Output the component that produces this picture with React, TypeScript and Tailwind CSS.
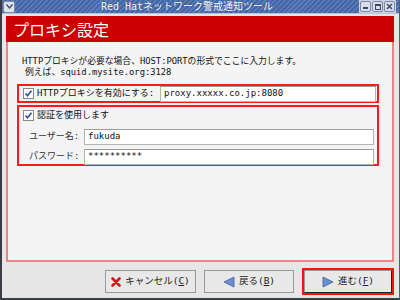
import React from 'react';

const jp = "font-['DejaVu_Sans_Mono','Noto_Sans_CJK_JP',monospace]";

const Check = () => (
    <span className='w-[11px] h-[11px] bg-white border border-[#8a8a8a] flex items-center justify-center shrink-0'>
        <svg width="9" height="9" viewBox="0 0 9 9">
            <path d="M1.5 4.5 L3.5 6.8 L7.5 1.8" stroke="#2a4f9c" strokeWidth="1.6" fill="none" />
        </svg>
    </span>
);

const TitleBtn = ({ kind }: { kind: 'min' | 'max' | 'close' }) => (
    <div className='w-[11px] h-[11px] rounded-[2px] border border-[#7d8aa6] bg-[#d8dde8] flex items-center justify-center'>
        {kind == 'min' && <div className='w-[5px] h-[2px] bg-[#3b4a6b] mt-[3px]' />}
        {kind == 'max' && <div className='w-[6px] h-[6px] border border-[#3b4a6b] border-t-2' />}
        {kind == 'close' && (
            <svg width="7" height="7" viewBox="0 0 7 7">
                <path d="M1 1 L6 6 M6 1 L1 6" stroke="#3b4a6b" strokeWidth="1.5" />
            </svg>
        )}
    </div>
);

const Field = ({ value, className }: { value: string; className?: string }) => (
    <div className={'h-[16px] bg-white border border-[#b4b4b4] border-t-[#9c9c9c] flex items-center px-[3px] text-[9px] text-[#111] whitespace-nowrap ' + (className ?? '')}>
        {value}
    </div>
);

const App = () => {
    return (
        <div className={'w-[400px] h-[300px] bg-[#e6e6e6] border-l-2 border-b-2 border-r border-l-[#3a3d44] border-b-[#3a3d44] border-r-[#5a5d64] flex flex-col overflow-hidden ' + jp}>
            {/* title bar */}
            <div className='h-[14px] flex items-center bg-[repeating-linear-gradient(135deg,#5b7cb8_0px,#5b7cb8_1.5px,#4566a4_1.5px,#4566a4_3.5px)] border-b border-[#b9c3d6]'>
                <div className='w-[12px] h-[12px] ml-px bg-[#dfe3ea] border border-[#7d8aa6] rounded-[2px] flex items-center justify-center'>
                    <svg width="7" height="5" viewBox="0 0 7 5">
                        <path d="M0.5 0.5 L3.5 4 L6.5 0.5" stroke="#3b4a6b" strokeWidth="1.3" fill="none" />
                    </svg>
                </div>
                <div className='flex-1 text-center text-[10px] leading-[12px] text-white whitespace-nowrap [text-shadow:0_0_1px_#1d3566]'>
                    Red Hatネットワーク警戒通知ツール
                </div>
                <div className='flex gap-px mr-[3px] bg-[#c9d1e2] p-px'>
                    <TitleBtn kind='min' />
                    <TitleBtn kind='max' />
                    <TitleBtn kind='close' />
                </div>
            </div>

            {/* panel */}
            <div className='ml-[4px] mr-[5px] mt-[2px] h-[246px] flex flex-col'>
                <div className="h-[26px] bg-[#cc0000] flex items-center pl-[7px] text-white text-[16px] font-['Noto_Sans_CJK_JP',sans-serif]">
                    プロキシ設定
                </div>
                <div className='flex-1 bg-[#f4f4f4] border-x-2 border-b-2 border-[#ea8585] pl-[9px] pr-[13px] pt-[14px]'>
                    <div className='ml-[5px] text-[8.8px] leading-[11px] text-[#111] whitespace-nowrap'>
                        <div>HTTPプロキシが必要な場合、HOST:PORTの形式でここに入力します。</div>
                        <div className='ml-[3px]'>例えば、squid.mysite.org:3128</div>
                    </div>
                    <div className='mt-[6px] h-[19px] border-2 border-[#ff1a1a] flex items-center pl-[4px] pr-px gap-[3px]'>
                        <Check />
                        <span className='text-[9px] text-[#111] w-[120px] shrink-0 whitespace-nowrap'>HTTPプロキシを有効にする:</span>
                        <Field value='proxy.xxxxx.co.jp:8080' className='flex-1 h-[15px]' />
                    </div>
                    <div className='mt-[2px] h-[61px] border-2 border-[#ff1a1a] pl-[4px] pr-[3px] pt-[2px]'>
                        <div className='flex items-center gap-[3px]'>
                            <Check />
                            <span className='text-[9px] text-[#111] whitespace-nowrap'>認証を使用します</span>
                        </div>
                        <div className='mt-[6px] flex items-center'>
                            <span className='w-[61px] pl-[6px] text-[9px] text-[#333] whitespace-nowrap'>ユーザー名:</span>
                            <Field value='fukuda' className='flex-1' />
                        </div>
                        <div className='mt-[4px] flex items-center'>
                            <span className='w-[61px] pl-[6px] text-[9px] text-[#333] whitespace-nowrap'>パスワード:</span>
                            <Field value='**********' className='flex-1' />
                        </div>
                    </div>
                </div>
            </div>

            {/* buttons */}
            <div className='flex justify-end items-center gap-[8px] mt-[6px] mr-[5px] text-[9.5px] text-[#222] whitespace-nowrap'>
                <div className='w-[91px] h-[23px] bg-[#e8e8e8] border border-[#9a9a9a] flex items-center justify-center gap-[4px]'>
                    <svg width="10" height="10" viewBox="0 0 10 10">
                        <path d="M1.5 1.5 L8.5 8.5 M8.5 1.5 L1.5 8.5" stroke="#d01818" strokeWidth="2.6" strokeLinecap="round" />
                    </svg>
                    <span>キャンセル(<span className='underline'>C</span>)</span>
                </div>
                <div className='w-[90px] h-[23px] bg-[#e8e8e8] border border-[#9a9a9a] flex items-center justify-center gap-[4px]'>
                    <svg width="12" height="12" viewBox="0 0 12 12">
                        <path d="M1 6 L11 1 L11 11 Z" fill="#6d8fcf" stroke="#3e5f9e" strokeWidth="0.8" />
                    </svg>
                    <span>戻る(<span className='underline'>B</span>)</span>
                </div>
                <div className='w-[92px] h-[27px] border-2 border-[#ff1010] flex'>
                    <div className='flex-1 bg-[#e8e8e8] border border-[#9a9a9a] border-b-[#222] border-r-[#222] flex items-center justify-center gap-[4px]'>
                        <svg width="12" height="12" viewBox="0 0 12 12">
                            <path d="M11 6 L1 1 L1 11 Z" fill="#6d8fcf" stroke="#3e5f9e" strokeWidth="0.8" />
                        </svg>
                        <span>進む(<span className='underline'>F</span>)</span>
                    </div>
                </div>
            </div>
        </div>
    );
};

export default App;
